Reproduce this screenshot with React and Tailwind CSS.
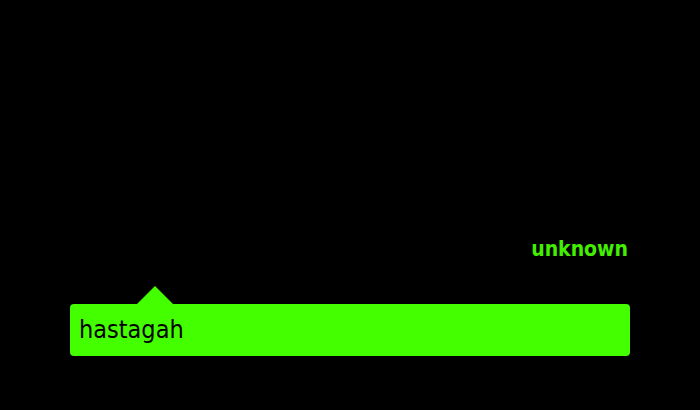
import React from 'react';

export default function App() {
  return (
    <div className="w-[700px] h-[410px] bg-black overflow-hidden font-['DejaVu_Sans_Condensed','DejaVu_Sans',sans-serif] [font-stretch:condensed]">
      <div className="flex flex-col px-[70px] pt-[236px]">
        {/* status label */}
        <div className="text-right text-[21px] leading-[26px] font-bold text-[#44ee00] pr-[2px]">unknown</div>

        {/* callout pointer */}
        <div className="mt-[24px] h-[18px] pl-[67px]">
          <svg width="36" height="18" viewBox="0 0 36 18" className="block">
            <polygon points="0,18 18,0 36,18" fill="#44ff00" />
          </svg>
        </div>

        <div className="h-[52px] rounded-[4px] bg-[#44ff00] flex items-center pl-[9px] pb-[1px]">
          <span className="text-[25px] text-black leading-none">hastagah</span>
        </div>
      </div>
    </div>
  );
}
